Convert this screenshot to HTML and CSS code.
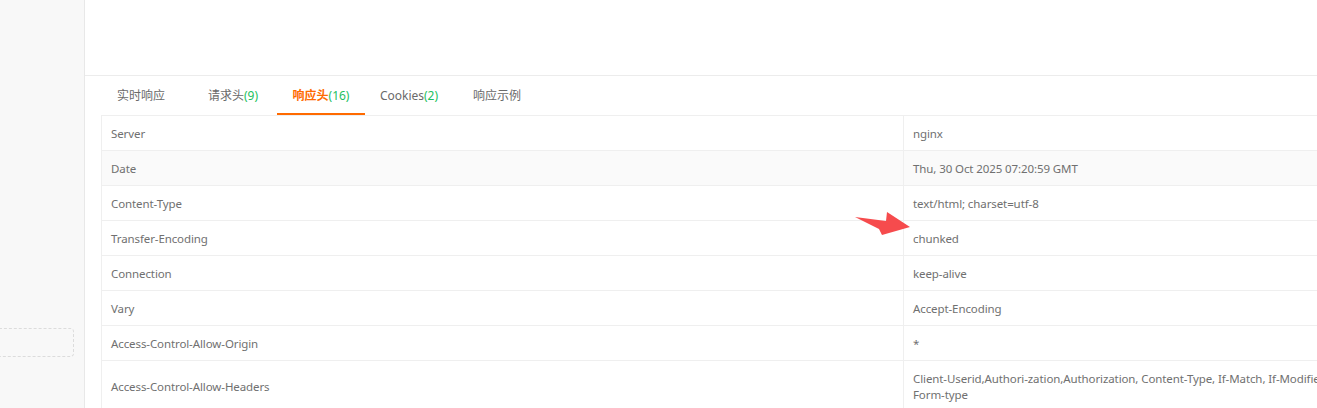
FILE: index.html
```html
<!DOCTYPE html>
<html lang="zh-CN">
<head>
<meta charset="utf-8">
<link rel="stylesheet" href="styles.css">
</head>
<body>
<div class="page">
  <aside class="sidebar">
    <div class="dash-box"></div>
  </aside>
  <main class="main">
    <div class="top"></div>
    <div class="tabs">
      <div class="tab first">实时响应</div>
      <div class="tab">请求头<span class="num">(9)</span></div>
      <div class="tab active">响应头<span class="num">(16)</span></div>
      <div class="tab">Cookies<span class="num">(2)</span></div>
      <div class="tab">响应示例</div>
    </div>
    <div class="table-wrap">
      <table class="headers">
        <colgroup><col class="c1"><col class="c2"></colgroup>
        <tr><td>Server</td><td>nginx</td></tr>
        <tr class="hover"><td>Date</td><td>Thu, 30 Oct 2025 07:20:59 GMT</td></tr>
        <tr><td>Content-Type</td><td>text/html; charset=utf-8</td></tr>
        <tr><td>Transfer-Encoding</td><td>chunked</td></tr>
        <tr><td>Connection</td><td>keep-alive</td></tr>
        <tr><td>Vary</td><td>Accept-Encoding</td></tr>
        <tr><td>Access-Control-Allow-Origin</td><td>*</td></tr>
        <tr class="tall"><td>Access-Control-Allow-Headers</td><td><span class="nowrap">Client-Userid,Authori-zation,Authorization, Content-Type, If-Match, If-Modified-Since, If-None-Match,</span><br>Form-type</td></tr>
      </table>
      <svg class="arrow" width="60" height="30" viewBox="0 0 60 30">
        <polygon points="0,7 31,11 32,2 55,17 27,25 24,19" fill="#f64b4d"/>
      </svg>
    </div>
  </main>
</div>
</body>
</html>
```

FILE: styles.css
```css
html, body {
  margin: 0;
  padding: 0;
  height: 100%;
  overflow: hidden;
  background: #fff;
}
body {
  font-family: "Noto Sans", "Noto Sans CJK SC", sans-serif;
  font-size: 12px;
  color: #666;
}
.page {
  display: flex;
  height: 408px;
  width: 1317px;
  overflow: hidden;
}
.sidebar {
  width: 84px;
  flex: none;
  background: #f8f8f8;
  border-right: 1px solid #e8e8e8;
  padding-top: 328px;
  box-sizing: content-box;
}
.dash-box {
  margin-left: -10px;
  width: 84px;
  height: 29px;
  border: 1px dashed #dcdcdc;
  border-radius: 4px;
  box-sizing: border-box;
}
.main {
  flex: 1;
  min-width: 0;
  overflow: hidden;
}
.top {
  height: 75px;
  border-bottom: 1px solid #ececec;
}
.tabs {
  display: flex;
  padding-left: 16px;
  height: 39px;
}
.tab {
  width: 88px;
  flex: none;
  text-align: center;
  line-height: 38px;
  padding-top: 1px;
  color: #6a6a6a;
  font-size: 12px;
  border-bottom: 2px solid transparent;
  box-sizing: border-box;
  white-space: nowrap;
}
.tab.first {
  padding-right: 8px;
}
.tab .num {
  color: #1dbf60;
}
.tab.active {
  color: #ff6a00;
  font-weight: 600;
  border-bottom-color: #ff6a00;
}
.tab.active .num {
  font-weight: 400;
}
.table-wrap {
  position: relative;
  margin-left: 16px;
}
.headers {
  border-collapse: collapse;
  width: 1260px;
  table-layout: fixed;
  font-size: 11.5px;
  letter-spacing: -0.1px;
}
.c1 { width: 802px; }
.headers td {
  border: 1px solid #efefef;
  height: 35px;
  padding: 2px 9px 0;
  box-sizing: border-box;
  vertical-align: middle;
  line-height: 16px;
  color: #707070;
}
.headers tr.hover td {
  background: #fafafa;
}
.headers tr.tall td {
  height: 50px;
}
.nowrap {
  white-space: nowrap;
}
.arrow {
  position: absolute;
  left: 754px;
  top: 95px;
}
```
